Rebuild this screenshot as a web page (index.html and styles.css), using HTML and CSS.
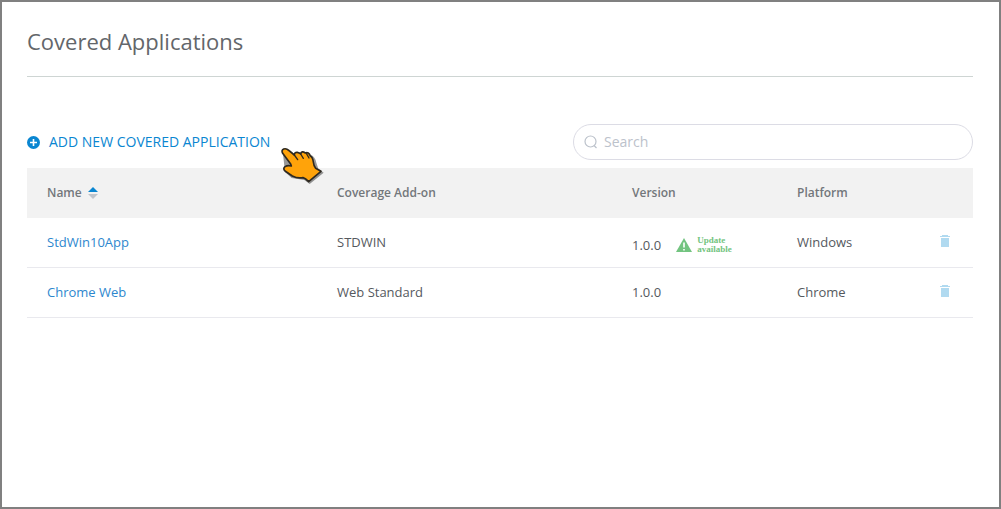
FILE: index.html
```html
<!DOCTYPE html>
<html lang="en">
<head>
<meta charset="utf-8">
<meta name="viewport" content="width=device-width, initial-scale=1">
<title>Covered Applications</title>
<link rel="stylesheet" href="styles.css">
</head>
<body>
<main class="page">
  <header class="page-header">
    <h1 class="page-title">Covered Applications</h1>
  </header>
  <div class="toolbar">
    <button class="add-button" type="button">
      <svg class="add-icon" viewBox="0 0 13 13" aria-hidden="true"><circle cx="6.5" cy="6.5" r="6.5" fill="#0a86d1"/><path d="M6.5 3v7M3 6.5h7" stroke="#fff" stroke-width="1.6"/></svg>
      <span>ADD NEW COVERED APPLICATION</span>
      <svg class="pointer" viewBox="0 0 162 138" aria-hidden="true">
        <path d="M24 36L22 24Q30 16 44 24L62 40Q70 28 82 32Q94 26 106 38Q120 42 124 62L130 80L146 92L104 126L88 114L50 108L30 90Z" fill="#444" opacity=".55"/>
        <path d="M23 34Q18 25 26 21Q34 18 42 26L58 39Q58 30 67 31Q73 32 77 36Q80 25 91 33Q101 29 106 42Q113 45 115 60Q116 71 122 79L138 88L101 119Q92 109 84 107Q67 110 52 102L30 87Q23 80 30 74Q38 69 49 72L47 66Z" fill="#ffa30a" stroke="#2e2920" stroke-width="5" stroke-linejoin="round"/>
        <path d="M58 39l10 14M77 36l8 13M94 34l8 14" fill="none" stroke="#2e2920" stroke-width="4" stroke-linecap="round"/>
      </svg>
    </button>
    <label class="search">
      <svg class="search-icon" viewBox="0 0 14 14" aria-hidden="true"><circle cx="6.500" cy="6.500" r="5.500" fill="none" stroke="#bcc2cb" stroke-width="1.200"/><path d="M10 10.500l2.500 2.500" stroke="#bcc2cb" stroke-width="1.200"/></svg>
      <input class="search-input" type="search" placeholder="Search" aria-label="Search">
    </label>
  </div>
  <table class="apps">
    <colgroup><col class="col-name"><col class="col-addon"><col class="col-version"><col class="col-platform"><col></colgroup>
    <thead>
      <tr>
        <th aria-sort="ascending"><button class="sort" type="button">Name
          <svg class="sort-icon" viewBox="0 0 10 12" aria-hidden="true"><path d="M0 5L5 0l5 5z" fill="#0a86d1"/><path d="M0 7h10l-5 5z" fill="#bfc4cb"/></svg></button></th>
        <th>Coverage Add-on</th><th>Version</th><th>Platform</th><th></th>
      </tr>
    </thead>
    <tbody>
      <tr>
        <td><a class="app-link" href="#">StdWin10App</a></td>
        <td>STDWIN</td>
        <td><div class="version">1.0.0
          <span class="update">
            <svg class="warning-icon" viewBox="0 0 16 14" aria-hidden="true"><path d="M8 0l8 14H0z" fill="#73c480"/><path d="M8 4.500v5M8 11v1.600" stroke="#fff" stroke-width="1.600"/></svg>
            <span>Update<br>available</span>
          </span></div></td>
        <td>Windows</td>
        <td class="actions"><button class="delete" type="button" aria-label="Delete StdWin10App"><svg class="trash-icon" viewBox="0 0 10 12" aria-hidden="true"><path d="M2 0h6v1h2v1H0V1h2zM1 3h8v9H1z" fill="#b1daf0"/></svg></button></td>
      </tr>
      <tr>
        <td><a class="app-link" href="#">Chrome Web</a></td>
        <td>Web Standard</td>
        <td>1.0.0</td>
        <td>Chrome</td>
        <td class="actions"><button class="delete" type="button" aria-label="Delete Chrome Web"><svg class="trash-icon" viewBox="0 0 10 12" aria-hidden="true"><path d="M2 0h6v1h2v1H0V1h2zM1 3h8v9H1z" fill="#b1daf0"/></svg></button></td>
      </tr>
    </tbody>
  </table>
</main>
</body>
</html>
```
FILE: styles.css
```css
* { box-sizing: border-box; }
body {
  margin: 0;
  background: #fff;
  color: #55595e;
  font: 13px/20px "Open Sans", "Noto Sans", sans-serif;
}
button {
  padding: 0;
  border: 0;
  background: none;
  font: inherit;
  color: inherit;
  cursor: pointer;
}
svg { display: block; flex: none; }
.page {
  min-height: 100vh;
  padding: 24px 26px 24px 25px;
  border: 2px solid #808080;
}
.page-header {
  padding-bottom: 20px;
  border-bottom: 1px solid #ced5d3;
}
.page-title {
  margin: 0;
  font-size: 22px;
  line-height: 30px;
  font-weight: 400;
  color: #63666a;
}
.toolbar {
  display: flex;
  align-items: center;
  justify-content: space-between;
  gap: 24px;
  margin: 47px 0 8px;
}
.add-button {
  position: relative;
  display: flex;
  align-items: center;
  gap: 9px;
  font-size: 14px;
  font-weight: 500;
  color: #0a86d1;
}
.add-icon { width: 13px; height: 13px; }
.pointer {
  position: absolute;
  left: 248px;
  top: 10px;
  width: 54px;
  height: 46px;
}
.search {
  display: flex;
  align-items: center;
  gap: 6px;
  flex: 0 1 400px;
  height: 36px;
  padding: 0 10px;
  border: 1px solid #dcdce5;
  border-radius: 18px;
}
.search-icon { width: 14px; height: 14px; }
.search-input {
  flex: 1;
  min-width: 0;
  padding: 0;
  border: 0;
  outline: 0;
  background: none;
  font: inherit;
  font-size: 14px;
  color: inherit;
}
.search-input::placeholder { color: #bcc2cb; opacity: 1; }
.apps {
  width: 100%;
  border-collapse: separate;
  border-spacing: 0;
  table-layout: fixed;
}
.col-name { width: 290px; }
.col-addon { width: 295px; }
.col-version { width: 165px; }
.col-platform { width: 120px; }
.apps th, .apps td {
  height: 50px;
  padding: 0 20px;
  text-align: left;
  vertical-align: middle;
}
.apps th {
  background: #f2f2f2;
  font-size: 12px;
  font-weight: 600;
  color: #73777b;
}
.apps td {
  padding-bottom: 2px;
  border-bottom: 1px solid #e9e9ee;
}
.sort {
  display: flex;
  align-items: center;
  gap: 6px;
}
.sort-icon { width: 10px; height: 12px; }
.app-link { color: #2d87ce; text-decoration: none; }
.version {
  display: flex;
  align-items: center;
  gap: 15px;
  padding-top: 6px;
}
.update {
  display: flex;
  align-items: center;
  gap: 5px;
  font: bold 9px/9px "Liberation Serif", serif;
  color: #73c480;
}
.warning-icon { width: 16px; height: 14px; }
.apps .actions { padding: 0 23px 4px; }
.delete { display: block; margin-left: auto; }
.trash-icon { width: 10px; height: 12px; }
```
